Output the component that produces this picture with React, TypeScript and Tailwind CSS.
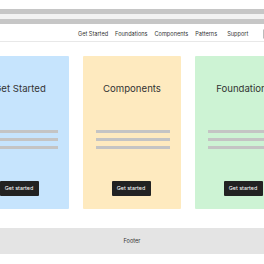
export default function App() {
  const cards = [
    { title: "Get Started", bg: "bg-[#c6e4fd]" },
    { title: "Components", bg: "bg-[#feeabf]" },
    { title: "Foundations", bg: "bg-[#cdf3d4]" },
  ];
  return (
    <div className="w-[264px] h-[264px] overflow-hidden bg-white" style={{ fontFamily: "Inter, 'Liberation Sans', sans-serif" }}>
      <div className="h-[9px]" />
      <div className="h-[5px] bg-[#c6c6c6]" />
      <div className="h-[5px] bg-[#f2f2f2]" />
      <div className="h-[5px] bg-[#c6c6c6]" />
      <div className="h-[18px] border-b border-[#e8e8e8] flex items-center pt-[4px] text-[5.6px] text-[#333] pl-[78px] whitespace-nowrap">
        <span>Get Started</span>
        <span className="ml-[7px]">Foundations</span>
        <span className="ml-[7px]">Components</span>
        <span className="ml-[7px]">Patterns</span>
        <span className="ml-[10px]">Support</span>
        <span className="ml-[15px] w-[12px] h-[10px] border border-[#bbb] rounded-[1px] shrink-0 -mt-[1px]" />
      </div>
      <div className="flex gap-[14px] ml-[-29px] mt-[14px]">
        {cards.map((c) => (
          <div key={c.title} className={`w-[98px] h-[153px] shrink-0 rounded-[1px] ${c.bg} flex flex-col items-center`}>
            <div className="mt-[28px] text-[9.6px] text-[#333] leading-none whitespace-nowrap">{c.title}</div>
            <div className="mt-[36px] flex flex-col gap-[5px] w-[74px] ml-[2px]">
              <div className="h-[3px] bg-[#c4c4c4]" />
              <div className="h-[3px] bg-[#c4c4c4]" />
              <div className="h-[3px] bg-[#c4c4c4]" />
            </div>
            <div className="mt-[32px] w-[39px] h-[15px] bg-[#222] rounded-[1px] text-white text-[5.4px] flex items-center justify-center whitespace-nowrap -ml-[2px]">
              Get started
            </div>
          </div>
        ))}
      </div>
      <div className="mt-[19px] h-[26px] bg-[#e4e4e4] flex items-center justify-center text-[5.6px] text-[#333]">
        Footer
      </div>
    </div>
  );
}
